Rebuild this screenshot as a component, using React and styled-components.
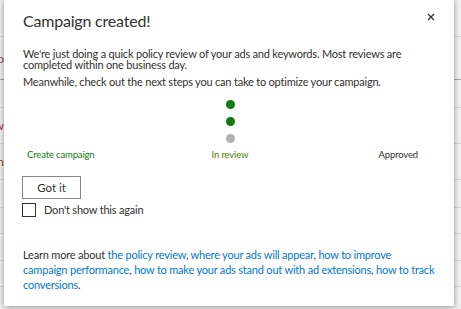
import React from "react";
import styled, { createGlobalStyle } from "styled-components";

const Global = createGlobalStyle`
  html, body { margin: 0; padding: 0; }
  body { width: 461px; height: 309px; overflow: hidden; font-family: Lato, "Open Sans", sans-serif; }
`;

const Page = styled.div`
  position: relative;
  width: 461px;
  height: 309px;
  background: #efefef;
  overflow: hidden;
`;

const Rows = styled.div`
  display: flex;
  flex-direction: column;
`;

const Row = styled.div`
  height: ${(p) => p.$h}px;
  box-sizing: border-box;
  border-bottom: 1px solid ${(p) => (p.$strong ? "#a8a8a8" : "#d6d6d6")};
  display: flex;
  align-items: center;
`;

const Cell = styled.div`
  width: 4px;
  overflow: hidden;
  display: flex;
  justify-content: flex-end;
  white-space: nowrap;
  font-size: 12px;
  color: #a4373a;
`;

const Dialog = styled.div`
  position: absolute;
  left: 4px;
  top: 0;
  width: 450px;
  height: 306px;
  background: #fff;
  box-shadow: 0 0 5px rgba(0, 0, 0, 0.22), 0 2px 6px rgba(0, 0, 0, 0.2);
  box-sizing: border-box;
  padding: 10px 17px 0 19px;
  display: flex;
  flex-direction: column;
  color: #323130;
`;

const Header = styled.div`
  display: flex;
  justify-content: space-between;
  align-items: flex-start;
`;

const Title = styled.h1`
  margin: 0;
  font-size: 16px;
  letter-spacing: -0.2px;
  font-weight: 400;
  line-height: 22px;
  color: #323130;
`;

const Close = styled.button`
  border: none;
  background: none;
  padding: 0;
  margin: 3px 2px 0 0;
  width: 8px;
  height: 8px;
  display: flex;
  cursor: pointer;
`;

const Text = styled.p`
  margin: ${(p) => p.$m || "0"};
  font-size: 11px;
  letter-spacing: -0.2px;
  line-height: 11px;
  color: #323130;
`;

const Stepper = styled.div`
  display: flex;
  flex-direction: column;
  align-items: center;
  margin-top: 13px;
`;

const Dots = styled.div`
  display: flex;
  flex-direction: column;
  align-items: center;
  gap: 8px;
`;

const Dot = styled.span`
  width: 9px;
  height: 9px;
  border-radius: 50%;
  background: ${(p) => (p.$done ? "#107c10" : "#b3b0ad")};
`;

const Labels = styled.div`
  align-self: stretch;
  display: grid;
  grid-template-columns: 1fr auto 1fr;
  margin-top: 5px;
`;

const Label = styled.span`
  justify-self: ${(p) => p.$align};
  margin: 0 ${(p) => p.$mr || 0}px 0 ${(p) => p.$ml || 0}px;
  font-size: 9.5px;
  letter-spacing: -0.15px;
  line-height: 13px;
  color: ${(p) => p.$c};
`;

const Button = styled.button`
  align-self: flex-start;
  margin-top: 15px;
  margin-left: -1px;
  width: 59px;
  height: 23px;
  box-sizing: border-box;
  border: 1px solid #8a8886;
  background: #fff;
  font-family: inherit;
  font-size: 11.5px;
  color: #323130;
  padding: 0;
`;

const CheckRow = styled.label`
  display: flex;
  align-items: center;
  gap: 8px;
  margin-top: 4px;
  margin-left: -1px;
  height: 14px;
  font-size: 11px;
  letter-spacing: -0.2px;
  line-height: 14px;
  color: #323130;
`;

const Box = styled.span`
  width: 14px;
  height: 14px;
  box-sizing: border-box;
  border: 1px solid #323130;
`;

const Footer = styled.p`
  margin: 30px 0 0;
  font-size: 11px;
  letter-spacing: -0.2px;
  line-height: 15px;
  color: #323130;
`;

const Link = styled.a`
  color: #0078d4;
  text-decoration: none;
`;

export default function App() {
  const rows = [
    { h: 37 },
    { h: 43, strong: true, t: "Campaign info" },
    { h: 28 },
    { h: 36, t: "Status: In review" },
    { h: 36, t: "Budget shown" },
    { h: 28 },
    { h: 26 },
    { h: 27 },
    { h: 26 },
    { h: 30 },
  ];
  return (
    <Page>
      <Global />
      <Rows>
        {rows.map((r, i) => (
          <Row key={i} $h={r.h} $strong={r.strong}>
            <Cell>{r.t}</Cell>
          </Row>
        ))}
      </Rows>
      <Dialog role="dialog">
        <Header>
          <Title>Campaign created!</Title>
          <Close aria-label="Close">
            <svg width="8" height="8" viewBox="0 0 8 8">
              <path d="M1 1L7 7M7 1L1 7" stroke="#323130" strokeWidth="1.3" />
            </svg>
          </Close>
        </Header>
        <Text $m="16px 0 0">
          We're just doing a quick policy review of your ads and keywords. Most reviews are completed within one business day.
        </Text>
        <Text $m="6px 0 0">Meanwhile, check out the next steps you can take to optimize your campaign.</Text>
        <Stepper>
          <Dots>
            <Dot $done />
            <Dot $done />
            <Dot />
          </Dots>
          <Labels>
            <Label $align="start" $ml={4} $c="#107c10">Create campaign</Label>
            <Label $align="center" $c="#498205">In review</Label>
            <Label $align="end" $mr={19} $c="#323130">Approved</Label>
          </Labels>
        </Stepper>
        <Button>Got it</Button>
        <CheckRow>
          <Box />
          Don't show this again
        </CheckRow>
        <Footer>
          Learn more about <Link href="#">the policy review</Link>, <Link href="#">where your ads will appear</Link>,{" "}
          <Link href="#">how to improve campaign performance</Link>, <Link href="#">how to make your ads stand out with ad extensions</Link>,{" "}
          <Link href="#">how to track conversions</Link>.
        </Footer>
      </Dialog>
    </Page>
  );
}
